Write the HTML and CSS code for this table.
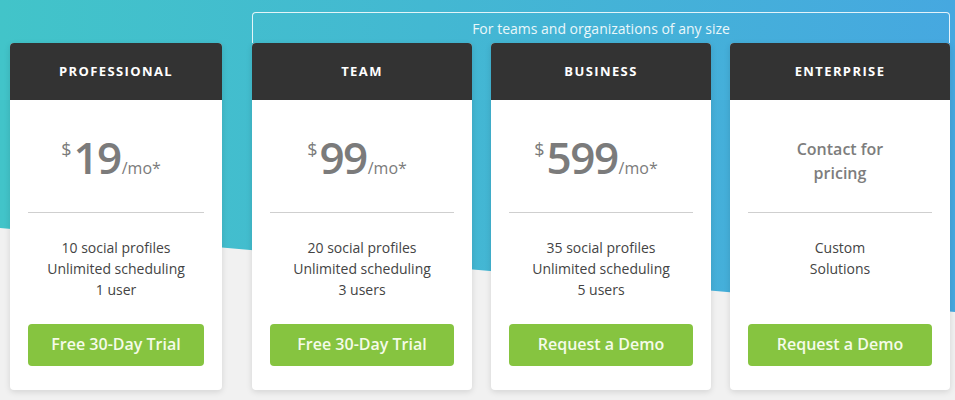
FILE: index.html
```html
<!DOCTYPE html>
<html>
<head>
<meta charset="utf-8">
<link rel="stylesheet" href="styles.css">
</head>
<body>
<div class="page">
  <div class="plans">
    <div class="card card-single">
      <div class="card-head">PROFESSIONAL</div>
      <div class="card-body">
        <div class="price"><div class="price-inner"><span class="cur">$</span><span class="amt">19</span><span class="per">/mo*</span></div></div>
        <div class="divider"></div>
        <div class="features">10 social profiles<br>Unlimited scheduling<br>1 user</div>
        <a class="btn">Free 30-Day Trial</a>
      </div>
    </div>
    <div class="group">
      <div class="group-label">For teams and organizations of any size</div>
      <div class="group-cards">
        <div class="card">
          <div class="card-head">TEAM</div>
          <div class="card-body">
            <div class="price"><div class="price-inner"><span class="cur">$</span><span class="amt">99</span><span class="per">/mo*</span></div></div>
            <div class="divider"></div>
            <div class="features">20 social profiles<br>Unlimited scheduling<br>3 users</div>
            <a class="btn">Free 30-Day Trial</a>
          </div>
        </div>
        <div class="card">
          <div class="card-head">BUSINESS</div>
          <div class="card-body">
            <div class="price"><div class="price-inner"><span class="cur">$</span><span class="amt">599</span><span class="per">/mo*</span></div></div>
            <div class="divider"></div>
            <div class="features">35 social profiles<br>Unlimited scheduling<br>5 users</div>
            <a class="btn">Request a Demo</a>
          </div>
        </div>
        <div class="card">
          <div class="card-head">ENTERPRISE</div>
          <div class="card-body">
            <div class="price"><span class="contact">Contact for<br>pricing</span></div>
            <div class="divider"></div>
            <div class="features">Custom<br>Solutions</div>
            <a class="btn">Request a Demo</a>
          </div>
        </div>
      </div>
    </div>
  </div>
</div>
</body>
</html>
```

FILE: styles.css
```css
html, body {
  margin: 0;
  padding: 0;
}
body {
  background: #f1f1f1;
  font-family: "Open Sans", "Liberation Sans", sans-serif;
  width: 955px;
  height: 400px;
  overflow: hidden;
}
.page {
  position: relative;
  height: 400px;
  padding: 12px 0 0 10px;
  box-sizing: border-box;
}
.page::before {
  content: "";
  position: absolute;
  left: 0;
  top: 0;
  right: 0;
  height: 320px;
  background: linear-gradient(90deg, #42c4c9 0%, #43b8d2 45%, #46a8e0 100%);
  clip-path: polygon(0 0, 100% 0, 100% 312px, 0 228px);
  z-index: 0;
}
.plans {
  position: relative;
  z-index: 1;
  display: flex;
  align-items: flex-start;
  gap: 30px;
}
.card {
  width: 220px;
  background: #fff;
  border-radius: 4px;
  box-shadow: 0 2px 6px rgba(0, 0, 0, 0.12);
  overflow: hidden;
}
.card-single {
  width: 212px;
  margin-top: 31px;
}
.card-head {
  height: 57px;
  background: #333333;
  color: #fff;
  font-weight: 700;
  font-size: 13px;
  letter-spacing: 1.4px;
  display: flex;
  align-items: center;
  justify-content: center;
  padding-bottom: 1px;
  box-sizing: border-box;
}
.card-body {
  padding: 0 18px 24px;
  display: flex;
  flex-direction: column;
  text-align: center;
}
.price {
  height: 112px;
  display: flex;
  align-items: center;
  justify-content: center;
  color: #7b7b7b;
}
.price-inner {
  display: flex;
  align-items: baseline;
  padding-right: 10px;
  margin-top: 2px;
}
.cur {
  font-size: 18px;
  line-height: 24px;
  align-self: flex-start;
  margin-top: 2px;
  margin-right: 2px;
}
.amt {
  font-size: 44px;
  font-weight: 600;
  letter-spacing: -1.5px;
  line-height: 44px;
}
.per {
  font-size: 16px;
  margin-left: 1px;
}
.contact {
  font-size: 16px;
  font-weight: 600;
  line-height: 24px;
  margin-top: 10px;
  color: #7d7d7d;
}
.divider {
  height: 1px;
  background: #cfcfcf;
}
.features {
  margin-top: 24px;
  min-height: 63px;
  font-size: 14px;
  line-height: 21px;
  color: #444;
}
.btn {
  margin-top: 24px;
  height: 42px;
  border-radius: 4px;
  background: #86c440;
  color: #f5fbe9;
  font-size: 16px;
  font-weight: 600;
  display: flex;
  align-items: center;
  justify-content: center;
  padding-bottom: 2px;
  box-sizing: border-box;
}
.group {
  width: 698px;
}
.group-label {
  height: 31px;
  box-sizing: border-box;
  border: 1px solid rgba(255, 255, 255, 0.85);
  border-bottom: none;
  border-radius: 4px 4px 0 0;
  color: #eaf7fa;
  font-size: 14px;
  display: flex;
  align-items: center;
  justify-content: center;
}
.group-cards {
  display: flex;
  gap: 19px;
}
```
